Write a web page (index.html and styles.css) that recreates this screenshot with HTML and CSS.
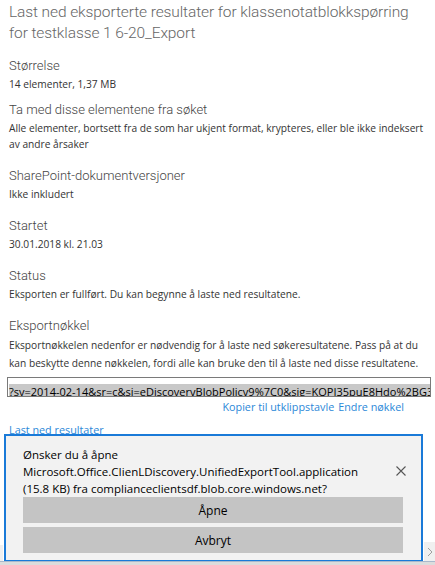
FILE: index.html
```html
<!DOCTYPE html>
<html lang="nb">
<head>
    <meta charset="UTF-8">
    <meta name="viewport" content="width=device-width, initial-scale=1.0">
    <title>Last ned eksporterte resultater</title>
    <link rel="stylesheet" href="styles.css">
</head>
<body>
    <div class="panel">
        <h1 class="panel-title">Last ned eksporterte resultater for klassenotatblokkspørring for testklasse 1 6-20_Export</h1>

        <div class="field compact">
            <h2 class="field-label">Størrelse</h2>
            <p class="field-value">14 elementer, 1,37 MB</p>
        </div>

        <div class="field">
            <h2 class="field-label">Ta med disse elementene fra søket</h2>
            <p class="field-value">Alle elementer, bortsett fra de som har ukjent format, krypteres, eller ble ikke indeksert av andre årsaker</p>
        </div>

        <div class="field">
            <h2 class="field-label">SharePoint-dokumentversjoner</h2>
            <p class="field-value">Ikke inkludert</p>
        </div>

        <div class="field">
            <h2 class="field-label">Startet</h2>
            <p class="field-value">30.01.2018 kl. 21.03</p>
        </div>

        <div class="field">
            <h2 class="field-label">Status</h2>
            <p class="field-value">Eksporten er fullført. Du kan begynne å laste ned resultatene.</p>
        </div>

        <div class="field key-field">
            <h2 class="field-label">Eksportnøkkel</h2>
            <p class="field-value key-note">Eksportnøkkelen nedenfor er nødvendig for å laste ned søkeresultatene. Pass på at du kan beskytte denne nøkkelen, fordi alle kan bruke den til å laste ned disse resultatene.</p>
            <div class="key-box"><span class="key-text">?sv=2014-02-14&amp;sr=c&amp;si=eDiscoveryBlobPolicy9%7C0&amp;sig=KQPI35puE8Hdo%2BG3cXf1</span></div>
            <div class="key-actions">
                <a href="#" class="link">Kopier til utklippstavle</a>
                <a href="#" class="link">Endre nøkkel</a>
            </div>
        </div>

        <a href="#" class="link download-link">Last ned resultater</a>
    </div>

    <!-- browser download prompt -->
    <div class="notify">
        <div class="notify-body">
            <p class="notify-text">Ønsker du å åpne<br>Microsoft.Office.CIienLDiscovery.UnifiedExportTool.application<br>(15.8 KB) fra complianceclientsdf.blob.core.windows.net?</p>
            <button class="notify-close" aria-label="Lukk">
                <svg width="10" height="10" viewBox="0 0 10 10"><path d="M0.5 0.5 L9.5 9.5 M9.5 0.5 L0.5 9.5" stroke="#555" stroke-width="1.1" fill="none"/></svg>
            </button>
        </div>
        <button class="notify-btn">Åpne</button>
        <button class="notify-btn">Avbryt</button>
    </div>

    <div class="scroll-stub left"></div>
    <div class="scroll-stub right">
        <svg width="6" height="10" viewBox="0 0 6 10"><path d="M1 1 L5 5 L1 9" stroke="#a0a0a0" stroke-width="1" fill="none"/></svg>
    </div>
    <div class="bottom-bar"></div>
</body>
</html>
```

FILE: styles.css
```css
* {
    margin: 0;
    padding: 0;
    box-sizing: border-box;
}

body {
    font-family: "Open Sans", "Noto Sans", sans-serif;
    background: #fff;
    color: #333;
    overflow: hidden;
}

.panel {
    padding: 2px 4px 0 9px;
}

.panel-title {
    font-family: Roboto, "Open Sans", sans-serif;
    font-size: 15.5px;
    font-weight: 300;
    letter-spacing: -0.1px;
    line-height: 21px;
    color: #666;
    padding-right: 12px;
    margin-bottom: 12px;
}

.field {
    margin-bottom: 14px;
}

.field.compact {
    margin-bottom: 8px;
}

.field-label {
    font-family: Roboto, "Open Sans", sans-serif;
    font-size: 13px;
    font-weight: 300;
    line-height: 20px;
    color: #444;
}

.field-value {
    font-size: 10.2px;
    line-height: 16px;
    color: #333;
}

.key-field {
    margin-bottom: 0;
}

.key-note {
    line-height: 18px;
}

.key-box {
    margin: 5px 0 0 -2px;
    height: 20px;
    border: 1px solid #7a7a7a;
    overflow: hidden;
    white-space: nowrap;
    padding: 1px 1px;
}

.key-text {
    display: inline-block;
    font-size: 11px;
    line-height: 16px;
    color: #000;
    background: #c8c8c8;
}

.key-actions {
    display: flex;
    justify-content: flex-end;
    gap: 4px;
    padding-right: 27px;
    margin-top: 2px;
}

.link {
    font-size: 10.8px;
    line-height: 16px;
    color: #2b88d8;
    text-decoration: none;
}

.download-link {
    display: inline-block;
    margin-top: 7px;
    text-decoration: underline;
}

.notify {
    position: fixed;
    left: 4px;
    top: 434px;
    width: 419px;
    height: 128px;
    background: #f2f2f2;
    border: 2px solid #1a7ad8;
    padding: 9px 16px 0 17px;
}

.notify-body {
    display: flex;
    align-items: center;
    justify-content: space-between;
    height: 52px;
}

.notify-text {
    font-size: 11.5px;
    line-height: 17px;
    color: #000;
}

.notify-close {
    border: none;
    background: none;
    width: 12px;
    height: 12px;
    display: flex;
    align-items: center;
    justify-content: center;
    margin-right: -2px;
}

.notify-btn {
    display: block;
    width: 380px;
    height: 26px;
    margin-bottom: 4px;
    border: none;
    background: #c4c4c4;
    font-family: inherit;
    font-size: 12px;
    color: #000;
}

.scroll-stub {
    position: fixed;
    background: #f0f0f0;
    display: flex;
    align-items: center;
    justify-content: center;
}

.scroll-stub.left {
    left: 0;
    top: 545px;
    width: 3px;
    height: 16px;
}

.scroll-stub.right {
    right: 0;
    top: 542px;
    width: 11px;
    height: 19px;
}

.bottom-bar {
    position: fixed;
    left: 0;
    right: 0;
    top: 561px;
    height: 4px;
    background: #dcdcdc;
    border-top: 1px solid #a9b8cc;
}
```
